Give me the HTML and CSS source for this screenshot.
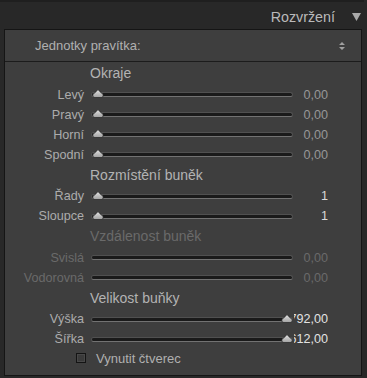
FILE: index.html
```html
<!DOCTYPE html>
<html lang="cs">
<head>
<meta charset="utf-8">
<title>Rozvržení</title>
<link rel="stylesheet" href="styles.css">
</head>
<body>
<div class="app">
  <div class="topline"></div>
  <div class="header">
    <span class="title">Rozvržení</span>
    <svg class="collapse" width="9" height="8" viewBox="0 0 9 8"><path d="M0 0 H9 L4.5 8 Z" fill="#a9a9a9"/></svg>
  </div>
  <div class="panel">
    <div class="units">
      <span class="units-label">Jednotky pravítka:</span>
      <svg class="updown" width="6" height="8" viewBox="0 0 6 8"><path d="M3 0 L6 3 H0 Z M0 5 H6 L3 8 Z" fill="#a0a0a0"/></svg>
    </div>
    <div class="content">
      <div class="heading">Okraje</div>
      <div class="row"><span class="label">Levý</span><span class="track"><svg class="thumb start" width="12" height="9" viewBox="0 0 11 8"><use href="#th"/></svg></span><span class="value">0,00</span></div>
      <div class="row"><span class="label">Pravý</span><span class="track"><svg class="thumb start" width="12" height="9" viewBox="0 0 11 8"><use href="#th"/></svg></span><span class="value">0,00</span></div>
      <div class="row"><span class="label">Horní</span><span class="track"><svg class="thumb start" width="12" height="9" viewBox="0 0 11 8"><use href="#th"/></svg></span><span class="value">0,00</span></div>
      <div class="row"><span class="label">Spodní</span><span class="track"><svg class="thumb start" width="12" height="9" viewBox="0 0 11 8"><use href="#th"/></svg></span><span class="value">0,00</span></div>

      <div class="heading">Rozmístění buněk</div>
      <div class="row"><span class="label">Řady</span><span class="track"><svg class="thumb start" width="12" height="9" viewBox="0 0 11 8"><use href="#th"/></svg></span><span class="value bright">1</span></div>
      <div class="row"><span class="label">Sloupce</span><span class="track"><svg class="thumb start" width="12" height="9" viewBox="0 0 11 8"><use href="#th"/></svg></span><span class="value bright">1</span></div>

      <div class="heading disabled">Vzdálenost buněk</div>
      <div class="row disabled"><span class="label">Svislá</span><span class="track"></span><span class="value">0,00</span></div>
      <div class="row disabled"><span class="label">Vodorovná</span><span class="track"></span><span class="value">0,00</span></div>

      <div class="heading">Velikost buňky</div>
      <div class="row"><span class="label">Výška</span><span class="track"><svg class="thumb end" width="12" height="9" viewBox="0 0 11 8"><use href="#th"/></svg></span><span class="value white">792,00</span></div>
      <div class="row"><span class="label">Šířka</span><span class="track"><svg class="thumb end" width="12" height="9" viewBox="0 0 11 8"><use href="#th"/></svg></span><span class="value white">612,00</span></div>

      <div class="check-row"><span class="checkbox"></span><span class="check-label">Vynutit čtverec</span></div>
    </div>
  </div>
</div>
<svg width="0" height="0" class="defs">
  <defs>
    <linearGradient id="tg" x1="0" y1="0" x2="0" y2="1">
      <stop offset="0" stop-color="#e4e4e4"/>
      <stop offset="1" stop-color="#a0a0a0"/>
    </linearGradient>
    <path id="th" d="M5.5 0.3 C6.6 1.8 7.9 3 9.4 4.1 C10.9 5.3 10.3 7.7 8.2 7.7 L2.8 7.7 C0.7 7.7 0.1 5.3 1.6 4.1 C3.1 3 4.4 1.8 5.5 0.3 Z" fill="url(#tg)" stroke="#262626" stroke-width="0.7"/>
  </defs>
</svg>
</body>
</html>
```
FILE: styles.css
```css
html, body {
  margin: 0;
  padding: 0;
}
body {
  background: #282828;
  font-family: "Liberation Sans", Arial, sans-serif;
  width: 367px;
  height: 378px;
  overflow: hidden;
}
.app {
  width: 367px;
  height: 378px;
}
.topline {
  height: 2px;
  margin-right: 3px;
  background: #1f1f1f;
}
.header {
  height: 27px;
  display: flex;
  align-items: center;
  justify-content: flex-end;
  padding-right: 6px;
}
.title {
  font-size: 14.3px;
  color: #bababa;
  margin-top: 2px;
}
.collapse {
  margin-left: 17px;
  margin-top: 3px;
}
.panel {
  margin-left: 4px;
  width: 356px;
  height: 345px;
  border: 1px solid #151515;
  background: #3e3e3e;
}
.units {
  height: 31px;
  border-bottom: 1px solid #1c1c1c;
  display: flex;
  align-items: center;
  padding-left: 30px;
  padding-right: 16px;
}
.units-label {
  flex: 1;
  font-size: 13px;
  color: #b0b0b0;
}
.content {
  display: flex;
  flex-direction: column;
  padding-top: 1px;
}
.heading {
  height: 21.5px;
  line-height: 21.5px;
  padding-left: 85px;
  font-size: 14px;
  color: #b3b3b3;
}
.heading.disabled {
  color: #6a6a6a;
}
.row {
  height: 20px;
  display: grid;
  grid-template-columns: 79px 202px 34px;
  column-gap: 7px;
  align-items: center;
  font-size: 12.6px;
}
.row > .value {
  margin-left: -6px;
  width: 34px;
}
.label {
  text-align: right;
  color: #acacac;
}
.track {
  position: relative;
  height: 5px;
  box-sizing: border-box;
  border-radius: 3px;
  background: #1a1a1a;
  border: 1px solid #505050;
  border-bottom-color: #727272;
}
.thumb {
  position: absolute;
  top: -4px;
  left: 0;
}
.thumb.end {
  left: auto;
  right: -1px;
}
.value {
  text-align: right;
  white-space: nowrap;
  overflow: hidden;
  direction: rtl;
  color: #979797;
  font-size: 12.6px;
}
.value.bright {
  color: #dadada;
}
.value.white {
  color: #e2e2e2;
}
.row.disabled .label,
.row.disabled .value {
  color: #6a6a6a;
}
.check-row {
  height: 18px;
  display: flex;
  align-items: center;
  padding-left: 71px;
}
.checkbox {
  width: 8px;
  height: 8px;
  border: 1px solid #141414;
  background: #3a3a3a;
  box-shadow: inset 0 0 0 1px #484848;
}
.check-label {
  margin-left: 10px;
  font-size: 13px;
  color: #b0b0b0;
}
.defs {
  position: absolute;
}
```
